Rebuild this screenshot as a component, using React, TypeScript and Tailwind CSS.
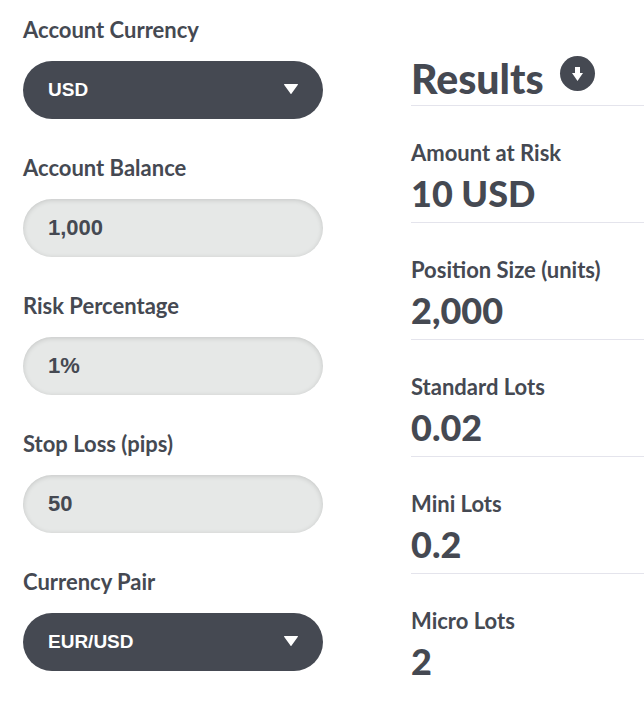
import { useState } from "react";

const ACCOUNT_CURRENCIES = ["USD", "EUR", "GBP", "JPY"];
const CURRENCY_PAIRS = ["EUR/USD", "GBP/USD", "AUD/USD"];

interface SelectFieldProps {
  id: string;
  label: string;
  value: string;
  options: string[];
  onChange: (value: string) => void;
}

interface TextFieldProps {
  id: string;
  label: string;
  value: string;
  onChange: (value: string) => void;
}

export default function App() {
  const [currency, setCurrency] = useState("USD");
  const [balance, setBalance] = useState("1,000");
  const [risk, setRisk] = useState("1%");
  const [stopLoss, setStopLoss] = useState("50");
  const [pair, setPair] = useState("EUR/USD");

  const results = calculate(balance, risk, stopLoss, currency);

  return (
    <main className="grid min-h-screen grid-cols-[minmax(0,300px)_minmax(0,1fr)] items-start gap-x-[88px] bg-white pb-8 pl-[23px] font-['Lato',sans-serif] text-[#454952]">
      <form className="flex flex-col gap-[34px] pt-[15px]">
        <SelectField
          id="currency"
          label="Account Currency"
          value={currency}
          options={ACCOUNT_CURRENCIES}
          onChange={setCurrency}
        />
        <TextField id="balance" label="Account Balance" value={balance} onChange={setBalance} />
        <TextField id="risk" label="Risk Percentage" value={risk} onChange={setRisk} />
        <TextField id="stop-loss" label="Stop Loss (pips)" value={stopLoss} onChange={setStopLoss} />
        <SelectField
          id="pair"
          label="Currency Pair"
          value={pair}
          options={CURRENCY_PAIRS}
          onChange={setPair}
        />
      </form>

      <section className="pt-14">
        <div className="flex items-start gap-4 border-b border-[#e4e4ec] pb-1">
          <h2 className="text-[41px] leading-[45px] font-black">Results</h2>
          <button
            type="button"
            aria-label="Show results"
            className="flex size-[35px] shrink-0 items-center justify-center rounded-full bg-[#454952] text-white"
          >
            <svg width="11" height="14" viewBox="0 0 11 14" fill="currentColor" aria-hidden="true">
              <path d="M3 0h5v6h3l-5.5 8L0 6h3z" />
            </svg>
          </button>
        </div>
        <dl>
          {results.map((r) => (
            <div key={r.label} className="border-b border-[#e4e4ec] pt-8 pb-1 last:border-b-0">
              <dt className="text-[22px] leading-[30px] font-bold">{r.label}</dt>
              <dd className="text-4xl leading-[50px] font-black">{r.value}</dd>
            </div>
          ))}
        </dl>
      </section>
    </main>
  );
}

function calculate(balance: string, risk: string, stopLoss: string, currency: string) {
  const amount = (toNumber(balance) * toNumber(risk)) / 100;
  const pips = toNumber(stopLoss);
  const units = pips > 0 ? (amount / pips) * 10000 : 0;

  return [
    { label: "Amount at Risk", value: `${format(amount)} ${currency}` },
    { label: "Position Size (units)", value: format(units) },
    { label: "Standard Lots", value: format(units / 100000) },
    { label: "Mini Lots", value: format(units / 10000) },
    { label: "Micro Lots", value: format(units / 1000) },
  ];
}

function toNumber(text: string) {
  return Number(text.replace(/[^0-9.]/g, "")) || 0;
}

function format(n: number) {
  return n.toLocaleString("en-US", { maximumFractionDigits: 2 });
}

function SelectField({ id, label, value, options, onChange }: SelectFieldProps) {
  return (
    <div className="flex flex-col gap-4">
      <label htmlFor={id} className="text-[22px] leading-[30px] font-bold">
        {label}
      </label>
      <div className="relative">
        <select
          id={id}
          value={value}
          onChange={(e) => onChange(e.target.value)}
          className="h-[58px] w-full appearance-none rounded-full bg-[#454952] px-[25px] font-['Liberation_Sans',sans-serif] text-[19px] font-bold text-white"
        >
          {options.map((o) => (
            <option key={o}>{o}</option>
          ))}
        </select>
        <svg
          width="14"
          height="10"
          viewBox="0 0 14 10"
          fill="currentColor"
          aria-hidden="true"
          className="pointer-events-none absolute top-[23px] right-[25px] text-white"
        >
          <path d="M.5 0h13a.5.5 0 0 1 .4.8L7.6 9.6a.7.7 0 0 1-1.2 0L.1.8A.5.5 0 0 1 .5 0z" />
        </svg>
      </div>
    </div>
  );
}

function TextField({ id, label, value, onChange }: TextFieldProps) {
  return (
    <div className="flex flex-col gap-4">
      <label htmlFor={id} className="text-[22px] leading-[30px] font-bold">
        {label}
      </label>
      <input
        id={id}
        type="text"
        value={value}
        onChange={(e) => onChange(e.target.value)}
        className="h-[58px] w-full rounded-full bg-[#e6e8e7] px-[25px] font-['Liberation_Sans',sans-serif] text-[22px] font-bold shadow-[inset_0_1px_5px_rgba(0,0,0,0.15)]"
      />
    </div>
  );
}
